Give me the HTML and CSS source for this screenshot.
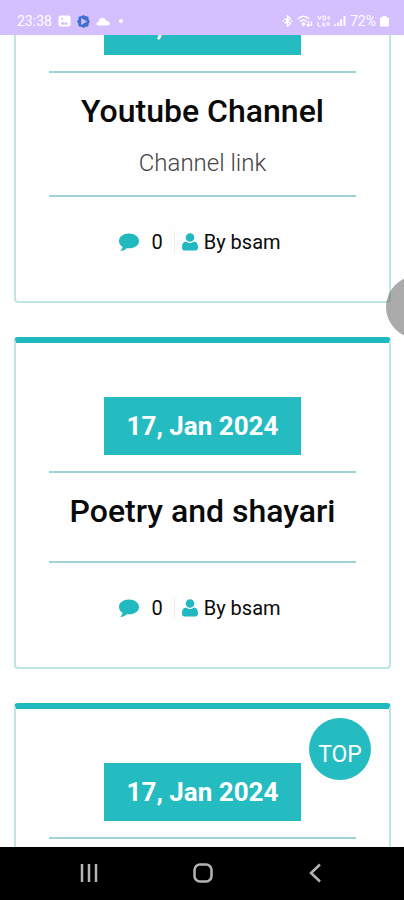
FILE: index.html
```html
<!DOCTYPE html>
<html lang="en">
<head>
<meta charset="utf-8">
<meta name="viewport" content="width=device-width, initial-scale=1">
<title>Posts</title>
<link rel="stylesheet" href="styles.css">
</head>
<body>
<svg class="sprite" aria-hidden="true">
  <symbol id="comment" viewBox="0 0 22 20"><path d="M11 1.500C5.200 1.500 1 4.900 1 9c0 2.500 1.300 4.400 3.500 5.800-.2 1.700-1 2.900-2.200 4.200 2.700-.2 4.900-1.200 6.400-2.800C15.700 17.100 21 13.700 21 9c0-4.100-4.300-7.500-10-7.500z"/></symbol>
  <symbol id="user" viewBox="0 0 18 20"><circle cx="9" cy="5.500" r="4.300"/><path d="M5 9.500C2.200 9.700 1 12 1 15.500 1 17.500 1.800 18.500 3.500 18.500h11c1.700 0 2.500-1 2.500-3 0-3.500-1.200-5.800-4-6C11.900 10.400 10.500 11 9 11s-2.900-.6-4-1.500z"/></symbol>
</svg>
<div class="app">
  <header class="status">
    <div class="status-group">
      <span>23:38</span>
      <svg width="13" height="12" viewBox="0 0 13 12"><rect x="0.500" y="0.500" width="12" height="11" rx="2" fill="#fff"/><path d="M2.500 9.500l2-3 2 2 1.500-1.500 2.500 2.500z" fill="#cdb8fb"/><circle cx="4" cy="3.700" r="1" fill="#cdb8fb"/></svg>
      <svg width="13" height="13" viewBox="0 0 13 13"><path d="M6.500 0L8.200 1l3.200.8.200 2.700L13 6.500l-1.300 2-.3 2.800-3.200.6-1.700 1.100-1.700-1.100-3.200-.6-.3-2.800L0 6.500l1.400-2 .2-2.700L4.800 1z" fill="#3f6fd0"/><path d="M4.200 3l5.800 3.500-5.800 3.500z" fill="#d4bfff"/></svg>
      <svg width="14" height="9" viewBox="0 0 14 9"><path d="M2.500 8.500C-.5 8.300 0 4.900 2.600 5 3-.4 9.200-.3 10 3.700c4.500.1 4.700 4.700 1.700 4.800z" fill="#fff"/></svg>
      <span class="dot"></span>
    </div>
    <div class="status-group status-right">
      <svg width="11" height="12" viewBox="0 0 11 12" fill="none" stroke="#fff" stroke-width="1.400"><path d="M2.500 3.500l6 5L5.500 11V1l3 2.500-6 5M.5 6h1.500M9 6h1.500"/></svg>
      <svg width="16" height="12" viewBox="0 0 16 12" fill="none" stroke="#fff" stroke-width="1.300"><path d="M.7 4Q6.500-1.500 12.300 4M3 6.500q3.500-3 7 0M5 8.700q1.500-1.300 3 0L6.500 10.500zM11.500 6v5M9.800 9.500l1.700 1.700L13 9.500M14.500 11V6"/></svg>
      <svg width="13" height="12" viewBox="0 0 13 12" fill="none" stroke="#fff"><path d="M1 1l1.500 4L4 1M6 1h2.500v4H6zM12 1v4M12 3h-2M1 7v4h2.500M6 7v4h2.500M6 9h2M10 7v4M12 7v4"/></svg>
      <svg width="12" height="12" viewBox="0 0 12 12" fill="#fff"><path d="M0 9.500h2V11H0zM3 7.500h2V11H3zM6 4.500h2V11H6zM9.500 1h2v10h-2z"/></svg>
      <span>72%</span>
      <svg width="9" height="12" viewBox="0 0 9 12"><path d="M2.500 1h4v1.500H8q1 0 1 1v7q0 1-1 1H1q-1 0-1-1v-7q0-1 1-1h1.500z" fill="#fff"/></svg>
    </div>
  </header>

  <main class="viewport">
    <div class="feed">
      <article class="card">
        <time class="date" datetime="2024-01-17">17, Jan 2024</time>
        <div class="body">
          <h2>Youtube Channel</h2>
          <p>Channel link</p>
        </div>
        <footer class="meta">
          <span class="comments"><svg class="icon-comment"><use href="#comment"/></svg>0</span>
          <span class="author"><svg class="icon-user"><use href="#user"/></svg>By bsam</span>
        </footer>
      </article>
      <article class="card">
        <time class="date" datetime="2024-01-17">17, Jan 2024</time>
        <div class="body">
          <h2>Poetry and shayari</h2>
        </div>
        <footer class="meta">
          <span class="comments"><svg class="icon-comment"><use href="#comment"/></svg>0</span>
          <span class="author"><svg class="icon-user"><use href="#user"/></svg>By bsam</span>
        </footer>
      </article>
      <article class="card">
        <time class="date" datetime="2024-01-17">17, Jan 2024</time>
        <div class="body"></div>
      </article>
    </div>
    <a class="top" href="#">TOP</a>
  </main>
  <span class="handle"></span>

  <nav class="navbar">
    <button type="button" aria-label="Recent apps"><svg width="20" height="20" viewBox="0 0 20 20"><path d="M3 1v18M10 1v18M17 1v18"/></svg></button>
    <button type="button" aria-label="Home"><svg width="20" height="20" viewBox="0 0 20 20"><rect x="1.500" y="1.500" width="17" height="17" rx="5.500"/></svg></button>
    <button type="button" aria-label="Back"><svg width="20" height="20" viewBox="0 0 20 20"><path d="M14 1.500L5 10l9 8.500"/></svg></button>
  </nav>
</div>
</body>
</html>
```
FILE: styles.css
```css
* { box-sizing: border-box; }

body {
  margin: 0;
  background: #fefefe;
  color: #0a0a0a;
  font-family: Roboto, "Liberation Sans", sans-serif;
}

.sprite { position: absolute; width: 0; height: 0; }

.app {
  position: relative;
  display: flex;
  flex-direction: column;
  height: 100vh;
  overflow: hidden;
}

.status {
  display: flex;
  flex: none;
  align-items: center;
  justify-content: space-between;
  height: 35px;
  padding: 7px 15px 0 17px;
  background: #d4bfff;
  color: #fff;
  font-size: 14px;
}

.status-group { display: flex; align-items: center; gap: 6px; }
.status-right { gap: 4px; }
.dot { width: 4px; height: 4px; margin-left: 3px; border-radius: 50%; background: #fff; }

.viewport { position: relative; flex: 1; min-height: 0; overflow: hidden; }

/* The list is scrolled part of the way through the first card. */
.feed {
  display: flex;
  flex-direction: column;
  gap: 34px;
  margin-top: -98px;
  padding: 0 13px 0 14px;
}

.card {
  display: flex;
  flex-direction: column;
  align-items: center;
  padding: 54px 33px 44px;
  border: 2px solid #c0e4e3;
  border-top: 6px solid #1fbac0;
  border-radius: 4px;
}

.date {
  margin-bottom: 16px;
  padding: 0 23px;
  background: #25bcc1;
  color: #fff;
  font-size: 26px;
  font-weight: 700;
  line-height: 58px;
}

.body {
  width: 100%;
  min-height: 91px;
  padding: 18px 0 15px;
  border: solid #9fd3d5;
  border-width: 2px 0;
  text-align: center;
}

h2 { margin: 0; font-size: 32px; font-weight: 500; line-height: 40px; }
p { margin: 15px 0 0; color: #444; font-size: 24px; font-weight: 300; line-height: 34px; }
h2:last-child { margin-bottom: 15px; }

.meta { display: flex; align-items: center; margin-top: 30px; font-size: 20px; line-height: 30px; }
.comments, .author { display: flex; align-items: center; }
.comments { gap: 11px; padding-right: 11px; border-right: 1px solid #eee; line-height: 22px; }
.author { gap: 5px; padding: 0 6px; }
.meta svg { fill: #20b9bf; }
.icon-comment { width: 22px; height: 20px; }
.icon-user { width: 18px; height: 20px; }

.top {
  position: absolute;
  right: 33px;
  bottom: 67px;
  width: 62px;
  height: 62px;
  padding-top: 7px;
  border-radius: 50%;
  background: #25bcc1;
  color: #fff;
  font-size: 23px;
  line-height: 60px;
  text-align: center;
  text-decoration: none;
}

.handle {
  position: absolute;
  top: 276px;
  right: -44px;
  width: 62px;
  height: 62px;
  border-radius: 50%;
  background: rgba(85, 85, 85, 0.5);
}

.navbar {
  display: flex;
  flex: none;
  justify-content: space-between;
  height: 53px;
  padding: 0 78px 2px 79px;
  background: #000;
}

.navbar button { display: flex; align-items: center; padding: 0; border: 0; background: none; }
.navbar svg { fill: none; stroke: #b5b5b5; stroke-width: 2.500; }
```
